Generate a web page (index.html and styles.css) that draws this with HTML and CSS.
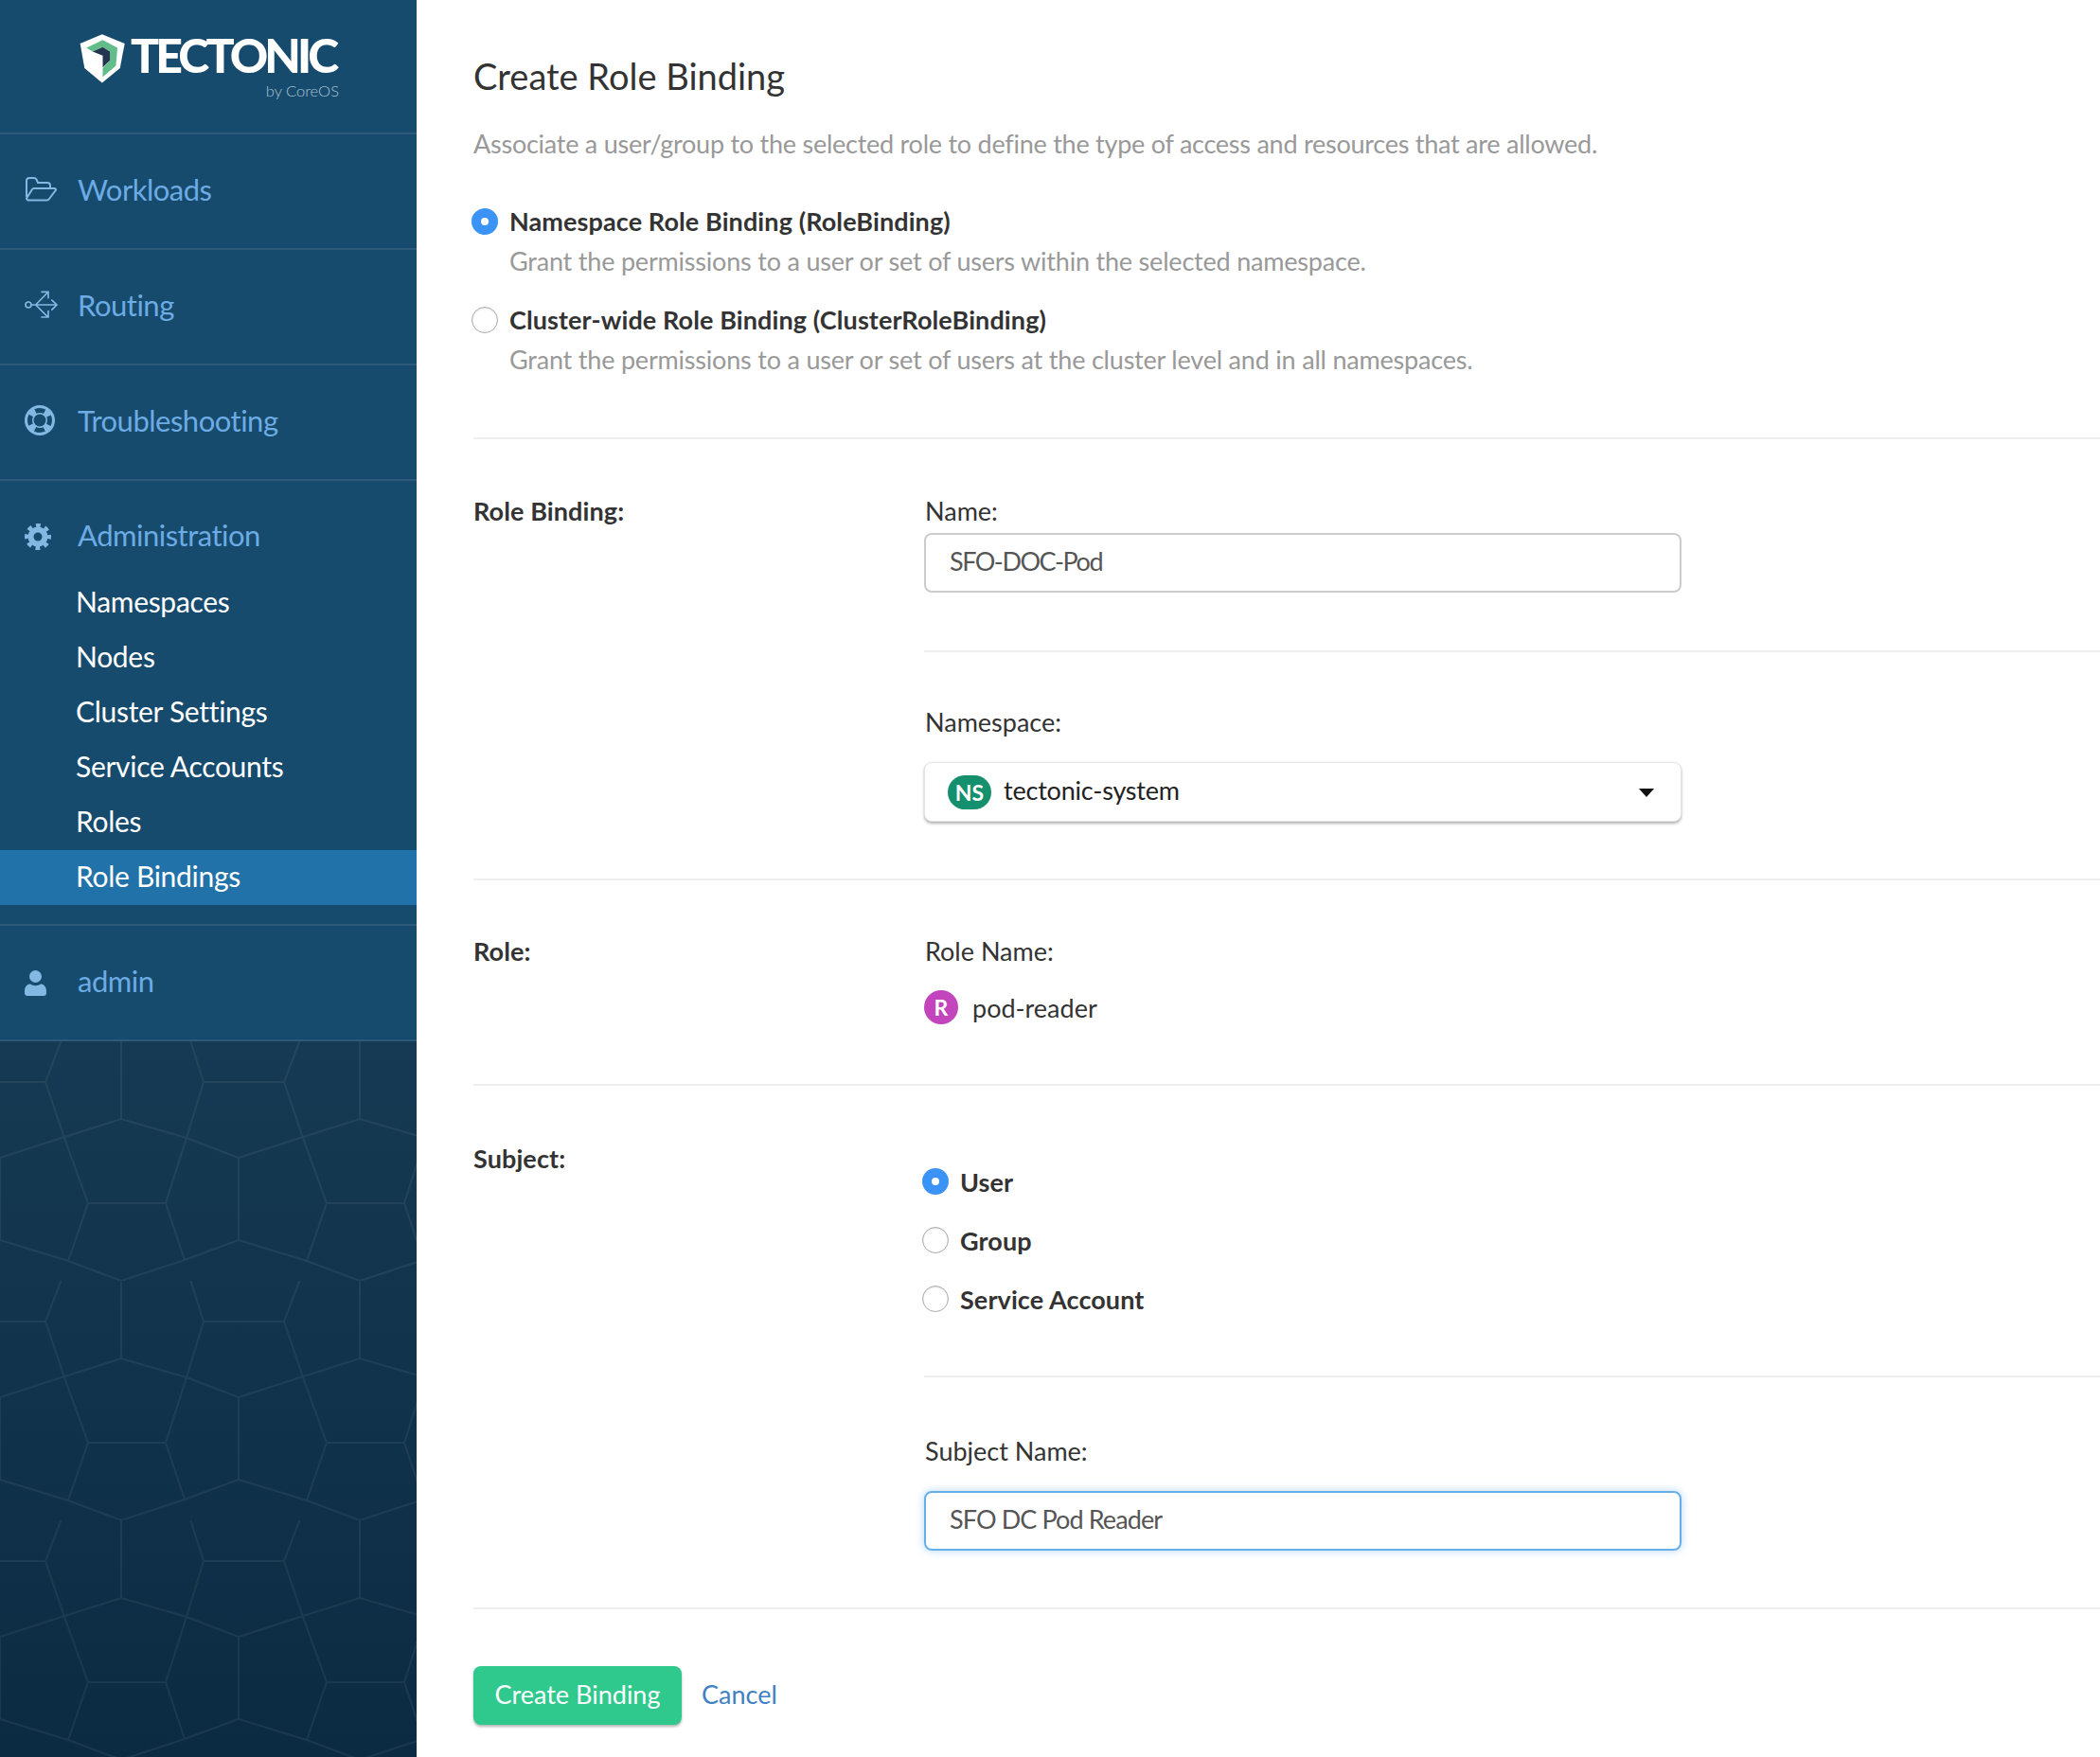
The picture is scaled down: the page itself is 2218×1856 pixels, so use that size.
FILE: index.html
```html
<!DOCTYPE html>
<html lang="en">
<head>
    <meta charset="UTF-8">
    <meta name="viewport" content="width=device-width, initial-scale=1.0">
    <title>Create Role Binding</title>
    <link rel="stylesheet" href="styles.css">
</head>
<body>
    <aside class="sidebar">
        <div class="brand">
            <svg class="brand-mark" viewBox="60 36 160 168">
                <polygon points="138,42 210,72 195,150 138,197 82,150 68,72" fill="#fff"/>
                <polygon points="88,85 140,60 187,85 182,143 140,178 140,150 163,125 163,97 140,83 108,97" fill="#63bd8a"/>
                <polygon points="108,97 140,83 163,97 163,125 140,148 140,110" fill="#22374f"/>
            </svg>
            <div class="brand-text">
                <div class="brand-name">TECTONIC</div>
                <div class="brand-by">by CoreOS</div>
            </div>
        </div>

        <nav class="nav">
            <div class="nav-section">
                <div class="nav-head">
                    <span class="nav-icon">
                        <svg class="icon-folder" viewBox="0 0 34 26" fill="none" stroke="currentColor" stroke-width="2">
                            <path d="M2 21V4a3 3 0 0 1 3-3h5a3 3 0 0 1 2.500 1.500L14 6h10a3 3 0 0 1 3 3v3"/>
                            <path d="M2 22.500L8 13a2 2 0 0 1 2-1h21a1.500 1.500 0 0 1 1.500 2.500L26 23a3 3 0 0 1-2.500 1.500H4.500a2.500 2.500 0 0 1-2.500-2z"/>
                        </svg>
                    </span>
                    <span class="nav-text">Workloads</span>
                </div>
            </div>
            <div class="nav-section">
                <div class="nav-head">
                    <span class="nav-icon">
                        <svg class="icon-routing" viewBox="33 48 108 96" fill="none" stroke="currentColor" stroke-width="5">
                            <circle cx="45" cy="96" r="9"/>
                            <path d="M54 96H134M118 80L135 96L118 113M68 96L106 57M85 55H108V76M68 96L106 134M85 135H108V114"/>
                        </svg>
                    </span>
                    <span class="nav-text">Routing</span>
                </div>
            </div>
            <div class="nav-section">
                <div class="nav-head">
                    <span class="nav-icon">
                        <svg class="icon-ring" viewBox="0 0 32 32">
                            <circle cx="16" cy="16" r="16" fill="currentColor"/>
                            <circle cx="16" cy="16" r="6.500" fill="#174b6e"/>
                            <circle cx="16" cy="16" r="10.500" fill="none" stroke="#174b6e" stroke-width="5" stroke-dasharray="10 6.490" stroke-dashoffset="5"/>
                        </svg>
                    </span>
                    <span class="nav-text">Troubleshooting</span>
                </div>
            </div>
            <div class="nav-section nav-section-admin">
                <div class="nav-head nav-head-admin">
                    <span class="nav-icon">
                        <svg class="icon-gear" viewBox="0 0 28 28" fill="none" stroke="currentColor">
                            <circle cx="14" cy="14" r="7.500" stroke-width="6"/>
                            <circle cx="14" cy="14" r="11.500" stroke-width="5" stroke-dasharray="4.600 4.432" stroke-dashoffset="2.300"/>
                        </svg>
                    </span>
                    <span class="nav-text">Administration</span>
                </div>
                <ul class="subnav">
                    <li>Namespaces</li>
                    <li>Nodes</li>
                    <li>Cluster Settings</li>
                    <li>Service Accounts</li>
                    <li>Roles</li>
                    <li class="active">Role Bindings</li>
                </ul>
            </div>
            <div class="nav-section">
                <div class="nav-head">
                    <span class="nav-icon">
                        <svg class="icon-user" viewBox="0 0 23 27" fill="currentColor">
                            <circle cx="11.500" cy="6.500" r="6.500"/>
                            <path d="M0 22c0-5 3-7.500 6-7.500 2 1.300 3.500 1.700 5.500 1.700s3.500-.4 5.500-1.700c3 0 6 2.500 6 7.500v2a3 3 0 0 1-3 3H3a3 3 0 0 1-3-3z"/>
                        </svg>
                    </span>
                    <span class="nav-text">admin</span>
                </div>
            </div>
        </nav>

        <div class="sidebar-bg">
            <svg class="hex-bg" width="100%" height="100%">
                <defs>
                    <pattern id="hex" width="252" height="253" patternUnits="userSpaceOnUse">
                        <path fill="none" stroke="#fff" stroke-opacity="0.06" stroke-width="2" d="M0 123L65 102L128 82L197 102L252 123M128 0V82M48 43L68 102L93 171M215 43L197 102L175 171M93 171H175M175 171L195 231M93 171L72 232M0 210L72 232L128 253L195 231L252 210M0 123V210M252 123V210M72 -20L48 43M195 -20L215 43M215 43H252M0 43H48"/>
                    </pattern>
                </defs>
                <rect width="100%" height="100%" fill="url(#hex)"/>
            </svg>
        </div>
    </aside>

    <main class="content">
        <h1 class="title">Create Role Binding</h1>
        <p class="lead">Associate a user/group to the selected role to define the type of access and resources that are allowed.</p>

        <div class="binding-type">
            <div class="radio-row">
                <span class="radio checked"></span>
                <div>
                    <div class="radio-label">Namespace Role Binding (RoleBinding)</div>
                    <div class="radio-desc">Grant the permissions to a user or set of users within the selected namespace.</div>
                </div>
            </div>
            <div class="radio-row">
                <span class="radio"></span>
                <div>
                    <div class="radio-label">Cluster-wide Role Binding (ClusterRoleBinding)</div>
                    <div class="radio-desc">Grant the permissions to a user or set of users at the cluster level and in all namespaces.</div>
                </div>
            </div>
        </div>

        <section class="row row-binding">
            <div class="row-title">Role Binding:</div>
            <div class="row-body">
                <label class="field-label">Name:</label>
                <div class="input input-tight">SFO-DOC-Pod</div>
                <div class="inner-rule rule-name"></div>
                <label class="field-label">Namespace:</label>
                <div class="dropdown">
                    <span class="badge badge-ns">NS</span>
                    <span class="dropdown-text">tectonic-system</span>
                    <span class="caret"></span>
                </div>
            </div>
        </section>

        <section class="row row-role">
            <div class="row-title">Role:</div>
            <div class="row-body">
                <label class="field-label">Role Name:</label>
                <div class="role-value">
                    <span class="badge badge-r">R</span>
                    <span>pod-reader</span>
                </div>
            </div>
        </section>

        <section class="row row-subject">
            <div class="row-title">Subject:</div>
            <div class="row-body">
                <div class="subject-kinds">
                    <div class="kind"><span class="radio checked"></span><span class="radio-label">User</span></div>
                    <div class="kind"><span class="radio"></span><span class="radio-label">Group</span></div>
                    <div class="kind"><span class="radio"></span><span class="radio-label">Service Account</span></div>
                </div>
                <div class="inner-rule rule-subject"></div>
                <label class="field-label">Subject Name:</label>
                <div class="input focused">SFO DC Pod Reader</div>
            </div>
        </section>

        <div class="actions">
            <button class="btn-create">Create Binding</button>
            <a class="cancel">Cancel</a>
        </div>
    </main>
</body>
</html>
```

FILE: styles.css
```css
* {
    box-sizing: border-box;
}

html, body {
    margin: 0;
    height: 1856px;
    overflow: hidden;
}

body {
    display: flex;
    font-family: "Lato", "Open Sans", sans-serif;
    font-size: 27px;
    color: #333;
    background: #fff;
}

/* Sidebar */
.sidebar {
    width: 440px;
    flex: none;
    display: flex;
    flex-direction: column;
    background: #174b6e;
}

.brand {
    height: 142px;
    display: flex;
    padding: 30px 0 0 82px;
    border-bottom: 2px solid #2b5a7b;
}

.brand-mark {
    width: 53px;
    height: 56px;
    margin-top: 4px;
}

.brand-text {
    margin-left: 3px;
    width: 220px;
}

.brand-name {
    font-weight: 900;
    font-size: 50px;
    line-height: 56px;
    letter-spacing: -3.9px;
    color: #fff;
    white-space: nowrap;
}

.brand-by {
    font-size: 16.500px;
    line-height: 20px;
    text-align: right;
    color: #a8c3d6;
    font-weight: 300;
}

.nav-section {
    height: 122px;
    border-bottom: 2px solid #2b5a7b;
}

.nav-section-admin {
    height: 470px;
}

.nav-head {
    height: 120px;
    display: flex;
    align-items: center;
    padding: 0 0 5px 26px;
    font-size: 31px;
    color: #6cabe4;
}

.nav-head-admin {
    height: 118px;
}

.nav-text {
    margin-left: 20px;
    letter-spacing: -0.5px;
}

.nav-icon {
    width: 36px;
    flex: none;
    display: flex;
    align-items: center;
    color: #82b8e2;
}

.icon-folder {
    width: 34px;
    height: 26px;
}

.icon-routing {
    width: 36px;
    height: 32px;
}

.icon-ring {
    width: 32px;
    height: 32px;
}

.icon-gear {
    width: 28px;
    height: 28px;
    margin-top: 4px;
}

.icon-user {
    width: 23px;
    height: 27px;
    margin-top: 6px;
}

.subnav {
    list-style: none;
    margin: -18px 0 0;
    padding: 0;
    font-size: 30px;
    letter-spacing: -0.3px;
    color: #fff;
}

.subnav li {
    height: 58px;
    line-height: 54px;
    padding-left: 80px;
}

.subnav .active {
    background: #2272aa;
}

.sidebar-bg {
    flex: 1;
    background: linear-gradient(#163a53, #0b2b42);
}

.hex-bg {
    display: block;
}

/* Main form */
.content {
    flex: 1;
    padding: 55px 0 0 60px;
    min-width: 0;
}

.title {
    margin: 0;
    font-size: 38px;
    line-height: 50px;
    font-weight: 400;
    color: #333;
}

.lead {
    margin: 29px 0 0;
    line-height: 36px;
    letter-spacing: -0.25px;
    color: #999;
}

.binding-type {
    margin-top: 45px;
    padding-bottom: 64px;
    border-bottom: 2px solid #eee;
}

.radio-row {
    display: flex;
    margin-bottom: 25px;
}

.radio-row:last-child {
    margin-bottom: 0;
}

.radio-row .radio {
    margin: 5px 12px 0 -2px;
}

.radio {
    flex: none;
    width: 28px;
    height: 28px;
    border-radius: 50%;
    background: #fff;
    border: 1px solid #aaa;
    box-shadow: inset 0 1px 2px rgba(0, 0, 0, 0.12);
}

.radio.checked {
    border: 10px solid #3b94f5;
    box-shadow: none;
}

.radio-label {
    font-weight: 700;
    line-height: 37px;
    letter-spacing: 0.1px;
    color: #333;
}

.radio-desc {
    line-height: 36px;
    margin-top: 6px;
    letter-spacing: -0.2px;
    color: #999;
}

.row {
    display: flex;
    border-bottom: 2px solid #eee;
}

.row-title {
    width: 476px;
    flex: none;
    font-weight: 700;
    line-height: 36px;
    letter-spacing: 0.1px;
}

.row-body {
    flex: 1;
    min-width: 0;
}

.row-binding {
    padding-top: 58px;
    height: 466px;
}

.row-role {
    padding-top: 57px;
    height: 217px;
}

.row-subject {
    padding-top: 59px;
    height: 553px;
}

.field-label {
    display: block;
    padding-left: 1px;
    line-height: 36px;
}

.input {
    width: 800px;
    height: 63px;
    margin-top: 5px;
    padding-left: 25px;
    line-height: 55px;
    border: 2px solid #ccc;
    border-radius: 8px;
    letter-spacing: -0.9px;
    color: #555;
}

.input-tight {
    letter-spacing: -1.5px;
}

.input.focused {
    margin-top: 24px;
    border-color: #66afe9;
    box-shadow: 0 0 8px rgba(102, 175, 233, 0.5);
}

.inner-rule {
    border-top: 2px solid #eee;
}

.rule-name {
    margin: 61px 0 56px;
}

.dropdown {
    width: 800px;
    height: 63px;
    margin-top: 24px;
    padding: 0 24px;
    display: flex;
    align-items: center;
    background: #fff;
    border-radius: 8px;
    border: 1px solid #e4e4e4;
    box-shadow: 0 2px 3px rgba(0, 0, 0, 0.3);
    color: #222;
}

.dropdown-text {
    margin-left: 13px;
    flex: 1;
    padding-bottom: 4px;
    letter-spacing: -0.2px;
}

.caret {
    width: 0;
    height: 0;
    border-left: 8px solid transparent;
    border-right: 8px solid transparent;
    border-top: 9px solid #111;
    margin: 2px 4px 0 0;
}

.badge {
    flex: none;
    display: inline-flex;
    align-items: center;
    justify-content: center;
    height: 36px;
    border-radius: 18px;
    color: #fff;
    font-size: 23px;
    font-weight: 700;
}

.badge-ns {
    width: 46px;
    background: #14906f;
}

.badge-r {
    width: 36px;
    background: #c245bd;
}

.role-value {
    display: flex;
    align-items: center;
    margin-top: 23px;
    gap: 15px;
}

.subject-kinds {
    margin-left: -2px;
    padding-top: 28px;
    display: flex;
    flex-direction: column;
    gap: 34px;
}

.kind {
    display: flex;
    align-items: center;
    height: 28px;
    gap: 12px;
}

.rule-subject {
    margin: 67px 0 60px;
}

.actions {
    display: flex;
    align-items: center;
    margin-top: 60px;
    gap: 21px;
}

.btn-create {
    width: 220px;
    height: 62px;
    padding: 0 0 4px;
    border: 0;
    border-radius: 8px;
    background: #2fc98e;
    box-shadow: 0 2px 3px rgba(0, 0, 0, 0.3);
    color: #fff;
    font: inherit;
}

.cancel {
    margin-bottom: 4px;
    color: #3f7fc4;
}
```
